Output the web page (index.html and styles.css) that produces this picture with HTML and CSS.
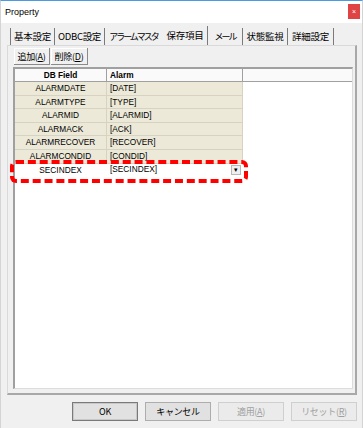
FILE: index.html
```html
<!DOCTYPE html>
<html>
<head>
<meta charset="utf-8">
<title>Property</title>
<link rel="stylesheet" href="styles.css">
</head>
<body>
<div class="window">
  <div class="titlebar">
    <span class="title">Property</span>
    <span class="close">&#215;</span>
  </div>

  <div class="content">
    <div class="tabs">
      <div class="tab first" style="width:45px">基本設定</div>
      <div class="tab" style="width:50px">ODBC設定</div>
      <div class="tab nosep narrow" style="width:58px">アラームマスタ</div>
      <div class="tab selected" style="width:45px">保存項目</div>
      <div class="tab narrow" style="width:35px">メール</div>
      <div class="tab" style="width:45px">状態監視</div>
      <div class="tab" style="width:46px">詳細設定</div>
    </div>

    <div class="panel">
      <div class="toolbar">
        <button class="tool">追加(<u>A</u>)</button>
        <button class="tool">削除(<u>D</u>)</button>
      </div>

      <div class="grid">
        <div class="row head">
          <div class="cell c1">DB Field</div>
          <div class="cell c2">Alarm</div>
          <div class="cell c3"></div>
        </div>
        <div class="row">
          <div class="cell c1">ALARMDATE</div>
          <div class="cell c2">[DATE]</div>
          <div class="cell c3"></div>
        </div>
        <div class="row">
          <div class="cell c1">ALARMTYPE</div>
          <div class="cell c2">[TYPE]</div>
          <div class="cell c3"></div>
        </div>
        <div class="row">
          <div class="cell c1">ALARMID</div>
          <div class="cell c2">[ALARMID]</div>
          <div class="cell c3"></div>
        </div>
        <div class="row">
          <div class="cell c1">ALARMACK</div>
          <div class="cell c2">[ACK]</div>
          <div class="cell c3"></div>
        </div>
        <div class="row">
          <div class="cell c1">ALARMRECOVER</div>
          <div class="cell c2">[RECOVER]</div>
          <div class="cell c3"></div>
        </div>
        <div class="row">
          <div class="cell c1">ALARMCONDID</div>
          <div class="cell c2">[CONDID]</div>
          <div class="cell c3"></div>
        </div>
        <div class="row editing">
          <div class="cell c1">SECINDEX</div>
          <div class="cell c2 combo">
            <span>[SECINDEX]</span>
            <span class="drop">&#9662;</span>
          </div>
          <div class="cell c3"></div>
        </div>

        <div class="highlight"></div>
      </div>
    </div>

    <div class="buttons">
      <button class="btn default">OK</button>
      <button class="btn">キャンセル</button>
      <button class="btn disabled">適用(<u>A</u>)</button>
      <button class="btn disabled">リセット(<u>R</u>)</button>
    </div>
  </div>
</div>
</body>
</html>
```

FILE: styles.css
```css
body {
	margin: 0;
	background-color: #f0f0f0;
	font-family: "Liberation Sans", "Noto Sans CJK JP", sans-serif;
	color: #000;
}

.window {
	width: 363px;
	height: 428px;
	box-sizing: border-box;
	border-top: 1px solid #4a9be0;
	border-left: 1px solid #d4d4d4;
	border-right: 1px solid #d4d4d4;
	background-color: #f0f0f0;
}

.titlebar {
	height: 22px;
	background-color: #fff;
	display: flex;
	align-items: center;
	justify-content: space-between;
	padding-left: 4px;
	padding-right: 2px;
}

.title {
	font-size: 9px;
	margin-top: -1px;
}

.close {
	width: 12px;
	height: 15px;
	background-color: #e04343;
	color: #fff;
	font-size: 7px;
	line-height: 15px;
	text-align: center;
	margin-top: -2px;
}

.content {
	padding: 5px 5px 0 6px;
}

.tabs {
	display: flex;
	height: 17px;
	padding-left: 3px;
	font-family: "Noto Sans CJK JP", sans-serif;
	font-size: 9.5px;
}

.tab {
	box-sizing: border-box;
	border-right: 1px solid #7a7a7a;
	text-align: center;
	line-height: 17px;
	white-space: nowrap;
	overflow: hidden;
	letter-spacing: -0.3px;
}

.tab.narrow {
	font-size: 9px;
	letter-spacing: -2px;
}

.tab.first {
	border-left: 1px solid #7a7a7a;
}

.tab.nosep {
	border-right-color: transparent;
}

.tab.selected {
	margin-top: -2px;
	line-height: 19px;
	height: 19px;
}

.panel {
	box-sizing: border-box;
	height: 350px;
	border: 1px solid #d9d9d9;
	border-right: 2px solid #a8a8a8;
	border-bottom: 2px solid #a8a8a8;
	padding: 2px 2px 4px 5px;
	display: flex;
	flex-direction: column;
}

.toolbar {
	display: flex;
	gap: 1px;
	height: 17px;
	margin-left: 1px;
}

.tool {
	font-family: "Noto Sans CJK JP", sans-serif;
	font-size: 9px;
	letter-spacing: -0.3px;
	padding: 0 2px;
	background-color: #f0f0f0;
	border: none;
	border-right: 1px solid #8a8a8a;
	border-bottom: 1px solid #8a8a8a;
	box-shadow: inset 1px 1px 0 #fff;
	height: 17px;
	line-height: 15px;
}

.tool:first-child {
	width: 36px;
}

.tool:last-child {
	width: 37px;
}

.grid {
	position: relative;
	flex: 1;
	margin-top: 2px;
	background-color: #fff;
	border-top: 2px solid #a0a0a0;
	border-left: 2px solid #a0a0a0;
	border-right: 1px solid #dcdcdc;
	border-bottom: 1px solid #dcdcdc;
	font-size: 8.3px;
}

.row {
	display: flex;
	height: 13.6px;
}

.cell {
	box-sizing: border-box;
	line-height: 13.6px;
	white-space: nowrap;
	overflow: hidden;
}

.c1 {
	width: 92px;
	text-align: center;
	background-color: #ece9d8;
	border-right: 1px solid #d6d3c3;
	border-bottom: 1px solid #d6d3c3;
}

.c2 {
	width: 136px;
	padding-left: 3px;
	background-color: #ece9d8;
	border-right: 1px solid #d6d3c3;
	border-bottom: 1px solid #d6d3c3;
}

.c3 {
	flex: 1;
}

.row.head {
	height: 13px;
}

.row.head .cell {
	background-color: #fafafa;
	font-weight: bold;
	border-right: 1px solid #a0a0a0;
	border-bottom: 1px solid #a0a0a0;
	line-height: 13px;
}

.row.head .c3 {
	border-right: none;
}

.row.editing .c1,
.row.editing .c2 {
	background-color: #fff;
	border-color: #fff;
}

.combo {
	display: flex;
	align-items: center;
	justify-content: space-between;
	padding-right: 1px;
}

.drop {
	width: 10px;
	height: 10px;
	box-sizing: border-box;
	border: 1px solid #b8b8b8;
	background-color: #f0f0f0;
	font-size: 7px;
	line-height: 8px;
	text-align: center;
}

.highlight {
	position: absolute;
	left: -5px;
	top: 91px;
	width: 238px;
	height: 23px;
	box-sizing: border-box;
	border: 4px dashed #ff0000;
	border-radius: 6px;
}

.buttons {
	display: flex;
	justify-content: flex-end;
	gap: 7px;
	margin-top: 7px;
}

.btn {
	width: 66px;
	height: 19px;
	font-family: "Noto Sans CJK JP", sans-serif;
	font-size: 9px;
	background-color: #e1e1e1;
	border: 1px solid #adadad;
	padding: 0;
	letter-spacing: -0.3px;
}

.btn.default {
	border: 1px solid #7a7a7a;
	box-shadow: inset 0 0 0 1px #c8c8c8;
}

.btn.disabled {
	background-color: #ebebeb;
	border-color: #cfcfcf;
	color: #a0a0a0;
}
```
